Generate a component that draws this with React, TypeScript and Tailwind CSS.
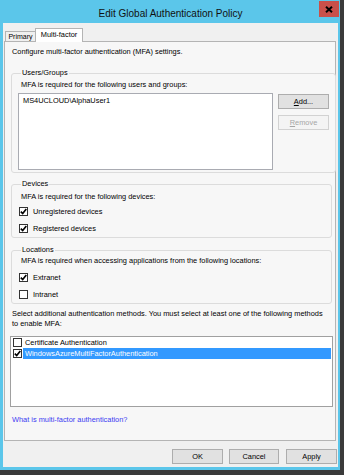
import React from "react";

function Check() {
  return (
    <svg width="7" height="7" viewBox="0 0 7 7" className="block">
      <path d="M0.8 3.6 L2.7 5.6 L6.3 0.9" fill="none" stroke="#000" strokeWidth="1.6" />
    </svg>
  );
}

function Box({ checked }: { checked: boolean }) {
  return (
    <div className="w-[9px] h-[9px] border border-[#333] bg-white flex items-center justify-center shrink-0">
      {checked ? <Check /> : null}
    </div>
  );
}

function CheckRow({ label, checked, first }: { label: string; checked: boolean; first?: string }) {
  return (
    <div className={"h-[17px] flex items-center pl-[1px] " + (first ?? "")}>
      <Box checked={checked} />
      <span className="ml-[5px]">{label}</span>
    </div>
  );
}

function Btn({ children, disabled, w }: { children: React.ReactNode; disabled?: boolean; w: string }) {
  return (
    <div
      className={
        "h-[15px] flex items-center justify-center border " +
        w +
        " " +
        (disabled ? "bg-[#f4f4f4] border-[#d2d2d2] text-[#a6a6a6]" : "bg-[#e1e1e1] border-[#adadad] text-[#000]")
      }
    >
      {children}
    </div>
  );
}

export default function App() {
  return (
    <div className="w-[344px] h-[475px] bg-[#3a3a3a] font-['Liberation_Sans',Arial,sans-serif]">
      <div className="w-[340px] h-[470px] bg-[#5bc6ea] flex flex-col pl-[3px] pr-[2px] pb-[3px]">
        <div className="h-[23px] relative flex items-center justify-center pt-[4px] text-[10px] leading-[12px] text-[#111]">
          Edit Global Authentication Policy
          <div className="absolute right-[-1px] top-[1px] w-[20px] h-[16px] bg-[#c9504a] flex items-center justify-center">
            <svg width="8" height="7" viewBox="0 0 8 7">
              <path d="M1 0.8 L7 6.2 M7 0.8 L1 6.2" stroke="#000" strokeWidth="2" />
            </svg>
          </div>
        </div>
        <div className="flex-1 bg-[#f0f0f0] flex flex-col text-[7.4px] leading-[10px] text-[#000]">
          <div className="h-[18px] flex items-end pl-[2px]">
            <div className="h-[10px] w-[31px] border border-b-0 border-[#b4b4b4] bg-[#f0f0f0] flex items-center justify-center text-[7px]">
              Primary
            </div>
            <div className="relative z-10 -mb-[1px] -ml-[1px] h-[14px] w-[48px] border border-b-0 border-[#b4b4b4] bg-white flex items-start justify-center pt-[1px]">
              Multi-factor
            </div>
          </div>
          <div className="ml-[1px] mr-[2px] h-[400px] border border-[#b4b4b4] bg-[#f7f7f7] flex flex-col">
            <div className="mt-[5px] pl-[7px] h-[10px]">Configure multi-factor authentication (MFA) settings.</div>

            <fieldset className="mt-[11px] ml-[6px] mr-[3px] border border-[#dcdcdc] rounded-[3px] px-[6px] pb-[2px]">
              <legend className="ml-[3px] px-[1px] leading-[10px]">Users/Groups</legend>
              <div className="mt-[2px] pl-[3px] h-[10px]">MFA is required for the following users and groups:</div>
              <div className="mt-[3px] flex">
                <div className="w-[255px] h-[77px] bg-white border border-[#a9abb2] pl-[4px] pt-[2px]">MS4UCLOUD\AlphaUser1</div>
                <div className="ml-[5px] flex flex-col">
                  <div className="mt-[1px]">
                    <Btn w="w-[51px]">
                      <span>
                        <span className="underline">A</span>dd...
                      </span>
                    </Btn>
                  </div>
                  <div className="mt-[6px]">
                    <Btn w="w-[51px]" disabled>
                      <span>
                        <span className="underline">R</span>emove
                      </span>
                    </Btn>
                  </div>
                </div>
              </div>
            </fieldset>

            <fieldset className="mt-[6px] ml-[6px] mr-[3px] border border-[#dcdcdc] rounded-[3px] px-[6px]">
              <legend className="ml-[3px] px-[1px] leading-[10px]">Devices</legend>
              <div className="mt-[3px] pl-[3px] h-[10px]">MFA is required for the following devices:</div>
              <CheckRow label="Unregistered devices" checked first="mt-[1px]" />
              <CheckRow label="Registered devices" checked />
            </fieldset>

            <fieldset className="mt-[7px] ml-[6px] mr-[3px] border border-[#dcdcdc] rounded-[3px] px-[6px]">
              <legend className="ml-[3px] px-[1px] leading-[10px]">Locations</legend>
              <div className="mt-[1px] pl-[3px] h-[10px]">MFA is required when accessing applications from the following locations:</div>
              <CheckRow label="Extranet" checked first="mt-[3px]" />
              <CheckRow label="Intranet" checked={false} />
            </fieldset>

            <div className="mt-[5px] pl-[7px] leading-[9.5px]">
              <div className="whitespace-nowrap">
                Select additional authentication methods. You must select at least one of the following methods
              </div>
              <div className="whitespace-nowrap">to enable MFA:</div>
            </div>

            <div className="mt-[8px] ml-[5px] mr-[2px] h-[71px] bg-white border border-[#a0a0a0] flex flex-col">
              <div className="h-[11px] flex items-center pl-[2px]">
                <Box checked={false} />
                <span className="ml-[2px] pl-[1px]">Certificate Authentication</span>
              </div>
              <div className="h-[11px] flex items-center pl-[2px]">
                <Box checked />
                <div className="ml-[1px] mr-[1px] flex-1 h-[11px] bg-[#3399ff] text-white pl-[2px] flex items-center">
                  WindowsAzureMultiFactorAuthentication
                </div>
              </div>
            </div>

            <div className="mt-[8px] pl-[7px] h-[10px] text-[#3b3bf2]">What is multi-factor authentication?</div>
          </div>
          <div className="mt-[8px] mr-[1px] flex justify-end">
            <Btn w="w-[51px]">OK</Btn>
            <div className="ml-[6px]">
              <Btn w="w-[50px]">Cancel</Btn>
            </div>
            <div className="ml-[7px]">
              <Btn w="w-[51px]">Apply</Btn>
            </div>
          </div>
        </div>
      </div>
    </div>
  );
}
